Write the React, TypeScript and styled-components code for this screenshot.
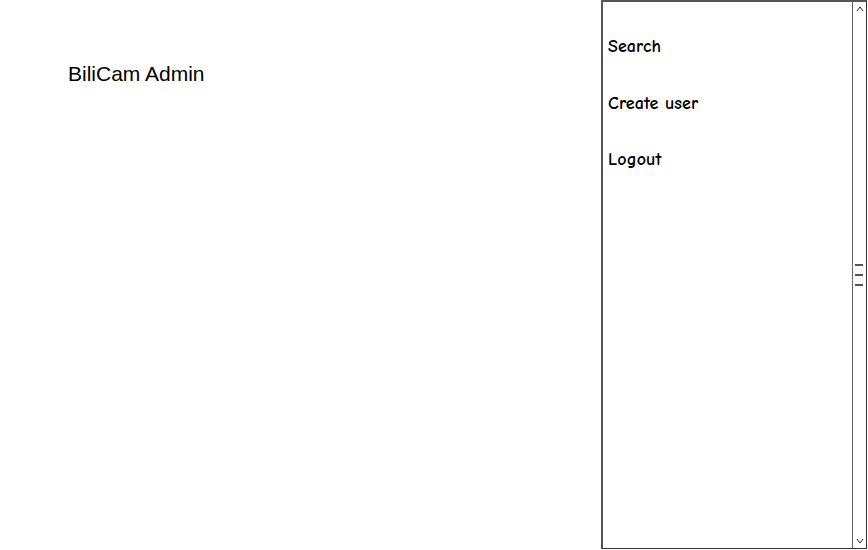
import React from "react";
import styled, { createGlobalStyle } from "styled-components";

const Global = createGlobalStyle`
  html, body { margin: 0; padding: 0; background: #fff; }
  body { width: 868px; height: 550px; overflow: hidden; }
`;

const Page = styled.div`
  display: flex;
  width: 868px;
  height: 550px;
`;

const Main = styled.main`
  flex: 0 0 601px;
  padding: 62px 0 0 68px;
  box-sizing: border-box;
`;

const Title = styled.h1`
  margin: 0;
  font-family: "Liberation Sans", Arial, sans-serif;
  font-weight: normal;
  font-size: 21px;
  line-height: 24px;
  color: #000;
`;

const Panel = styled.aside`
  flex: 0 0 266px;
  height: 549px;
  box-sizing: border-box;
  border: 1px solid #333;
  border-left: 2px solid #555;
  border-top: 2px solid #555;
  display: flex;
`;

const Menu = styled.nav`
  flex: 1;
  display: flex;
  flex-direction: column;
  gap: 34px;
  padding: 34px 0 0 5px;
`;

const MenuItem = styled.a`
  font-family: "Comic Sans MS", "Comic Neue", "DejaVu Sans", sans-serif;
  font-size: 18px;
  font-weight: 700;
  line-height: 22.5px;
  letter-spacing: 0.1px;
  color: #000;
  text-decoration: none;
  cursor: pointer;
`;

const Scrollbar = styled.div`
  flex: 0 0 13px;
  border-left: 1px solid #666;
  display: flex;
  flex-direction: column;
  justify-content: space-between;
  align-items: center;
`;

const Arrow = styled.svg`
  width: 10px;
  height: 10px;
  margin: 2px 0;
`;

const Thumb = styled.div`
  display: flex;
  flex-direction: column;
  gap: 8px;
  margin-right: 1px;
`;

const ThumbLine = styled.span`
  display: block;
  width: 8px;
  height: 2px;
  background: #555;
`;

export default function App() {
  return (
    <>
      <Global />
      <Page>
        <Main>
          <Title>BiliCam Admin</Title>
        </Main>
        <Panel>
          <Menu>
            <MenuItem>Search</MenuItem>
            <MenuItem>Create user</MenuItem>
            <MenuItem>Logout</MenuItem>
          </Menu>
          <Scrollbar>
            <Arrow viewBox="0 0 10 10">
              <path d="M2 7 L5 3 L8 7" fill="none" stroke="#222" strokeWidth="1" />
            </Arrow>
            <Thumb>
              <ThumbLine />
              <ThumbLine />
              <ThumbLine />
            </Thumb>
            <Arrow viewBox="0 0 10 10">
              <path d="M2 3 L5 7 L8 3" fill="none" stroke="#222" strokeWidth="1" />
            </Arrow>
          </Scrollbar>
        </Panel>
      </Page>
    </>
  );
}
